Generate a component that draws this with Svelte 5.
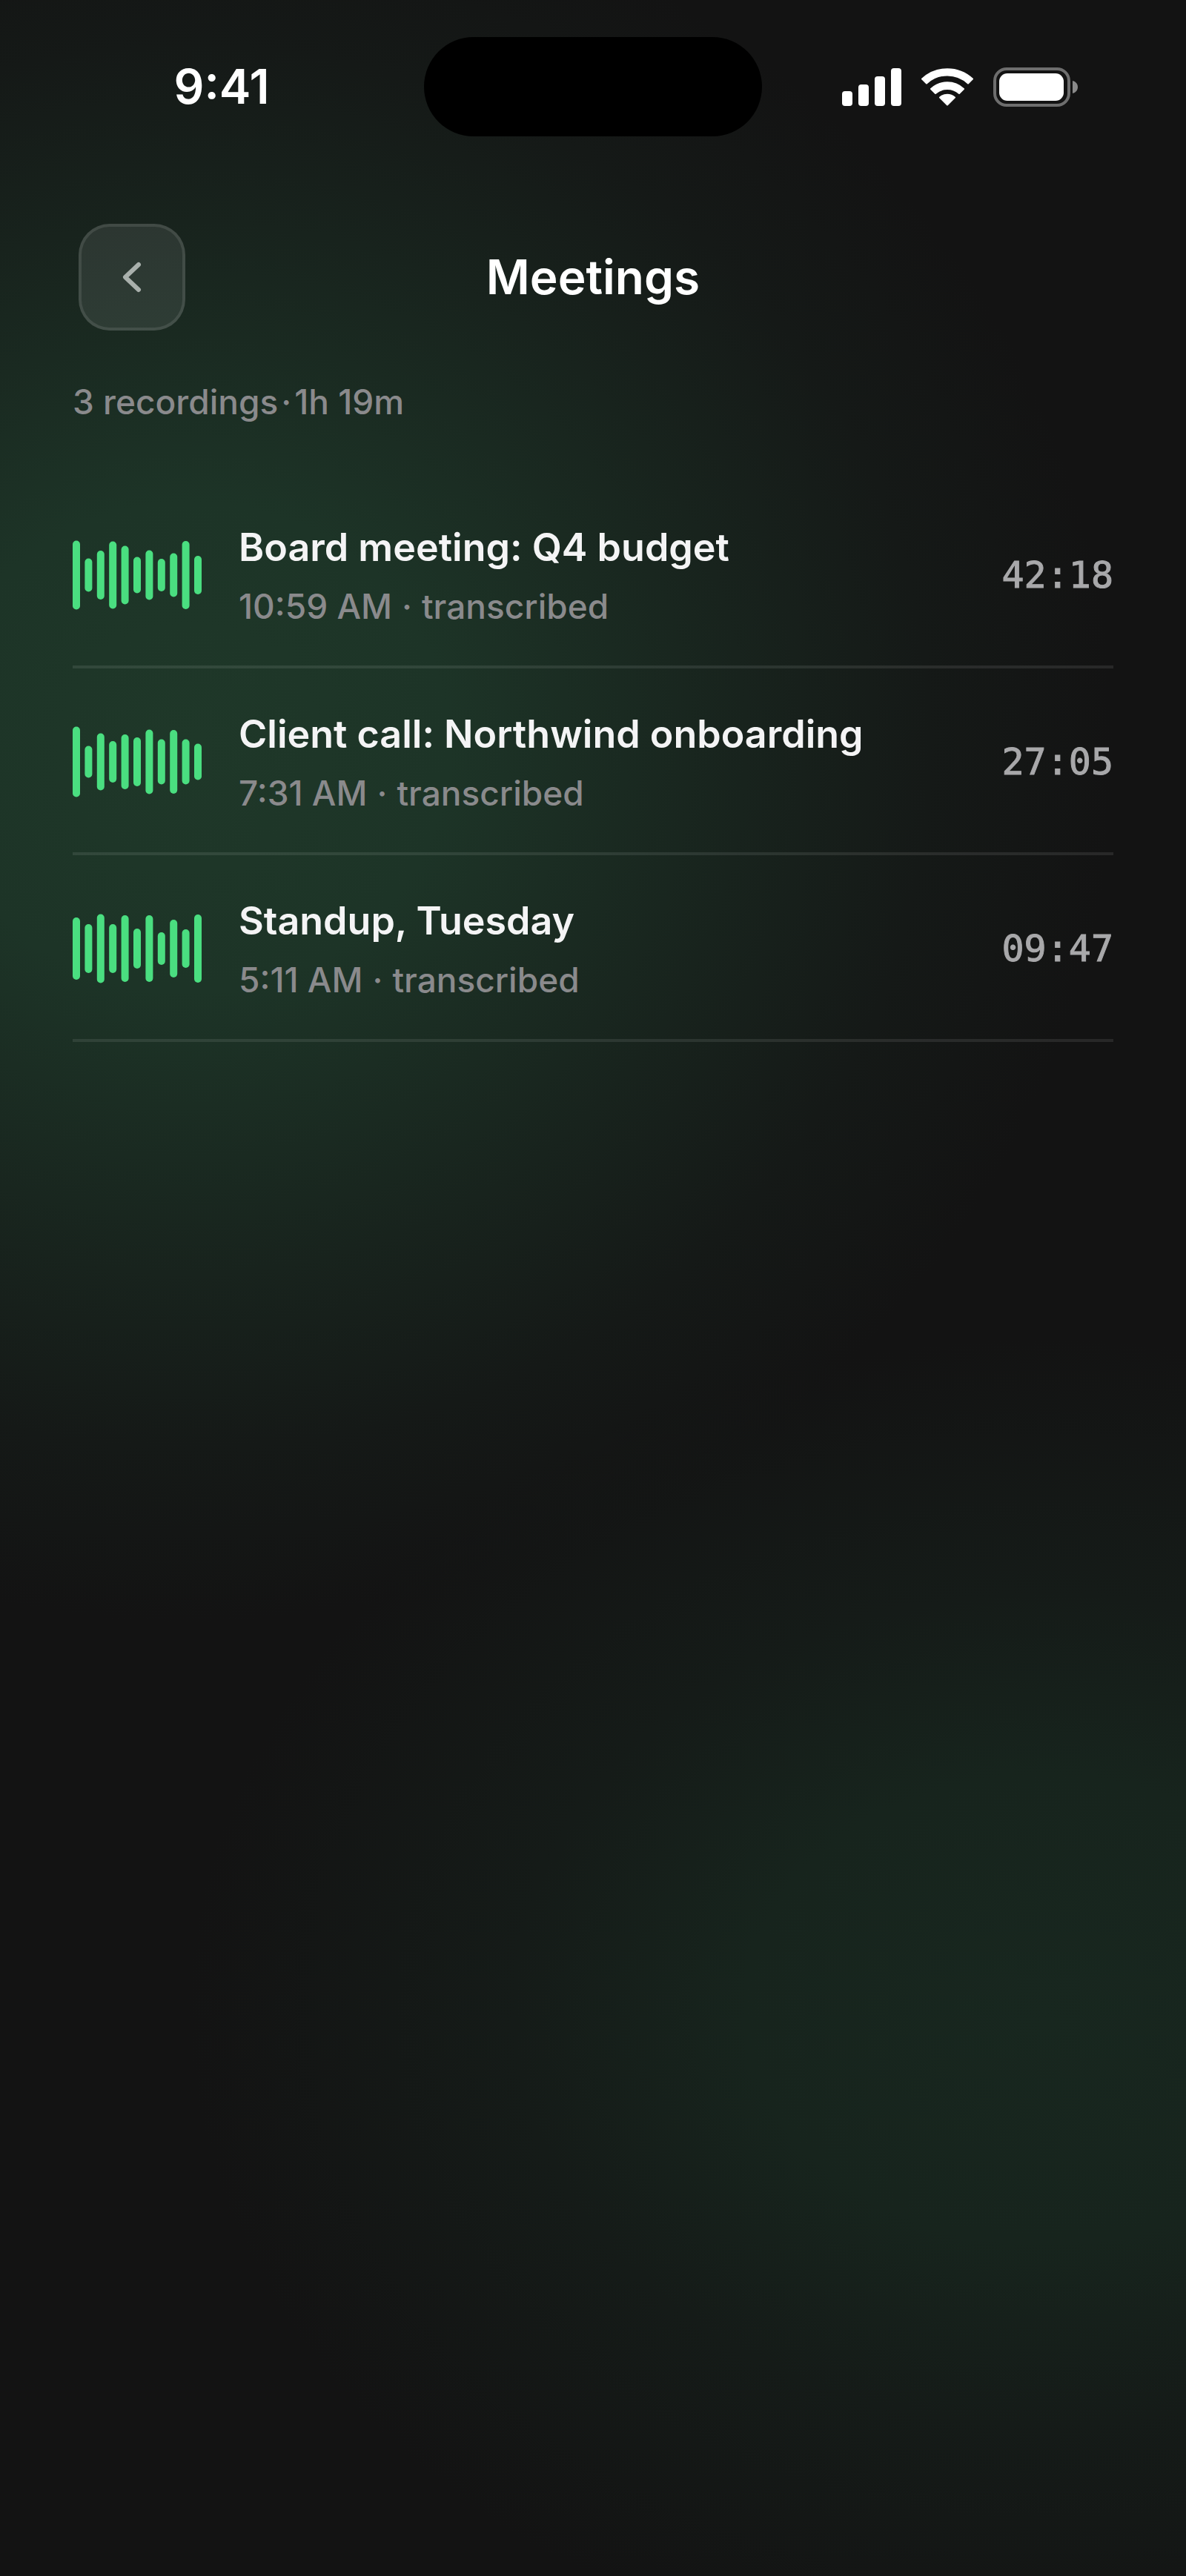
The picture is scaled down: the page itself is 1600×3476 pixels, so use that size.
<script lang="ts">
	type Recording = {
		title: string;
		time: string;
		status: string;
		duration: string;
		levels: number[];
	};

	const BAR_PITCH = 16.4;
	const WAVE_HEIGHT = 96;

	const recordings: Recording[] = [
		{
			title: 'Board meeting: Q4 budget',
			time: '10:59 AM',
			status: 'transcribed',
			duration: '42:18',
			levels: [93, 45, 66, 91, 79, 49, 67, 44, 59, 92, 52]
		},
		{
			title: 'Client call: Northwind onboarding',
			time: '7:31 AM',
			status: 'transcribed',
			duration: '27:05',
			levels: [95, 43, 77, 56, 74, 66, 87, 61, 86, 61, 49]
		},
		{
			title: 'Standup, Tuesday',
			time: '5:11 AM',
			status: 'transcribed',
			duration: '09:47',
			levels: [84, 66, 93, 66, 90, 54, 90, 44, 78, 52, 92]
		}
	];
</script>

<div class="screen">
	<div class="status-bar">
		<span class="clock">9:41</span>
		<span class="island"></span>
		<div class="indicators">
			<svg width="80" height="52" viewBox="0 0 80 52" fill="#fff" aria-hidden="true">
				<rect x="0" y="32" width="14" height="20" rx="4" />
				<rect x="22" y="23" width="14" height="29" rx="4" />
				<rect x="44" y="12" width="14" height="40" rx="4" />
				<rect x="66" y="1" width="14" height="51" rx="4" />
			</svg>
			<svg
				width="70"
				height="52"
				viewBox="0 0 70 52"
				fill="#fff"
				stroke="#fff"
				stroke-width="2"
				stroke-linejoin="round"
				aria-hidden="true"
			>
				<path d="M1 15.500A50 50 0 0 1 69 15.500L63 21.500A41 41 0 0 0 7 21.500Z" />
				<path d="M13 29A32 32 0 0 1 57 29L51 35A24 24 0 0 0 19 35Z" />
				<path d="M25 40.500A15 15 0 0 1 45 40.500L35 50.500Z" />
			</svg>
			<svg width="114" height="53" viewBox="0 0 114 53" aria-hidden="true">
				<rect x="2" y="2" width="100" height="49" rx="16" fill="none" stroke="#6e6e6e" stroke-width="4" />
				<rect x="8" y="8" width="87" height="37" rx="11" fill="#fff" />
				<path d="M107 18c4 1 7 4 7 8.500s-3 7.500-7 8.500z" fill="#8a8a8a" />
			</svg>
		</div>
	</div>

	<header>
		<button type="button" class="back" aria-label="Back">
			<svg width="30" height="44" viewBox="0 0 30 44" aria-hidden="true">
				<path d="M24 5L6 22l18 17" />
			</svg>
		</button>
		<h1>Meetings</h1>
	</header>

	<main>
		<p class="summary">3 recordings<span class="tight-dot">·</span>1h 19m</p>

		<ul>
			{#each recordings as rec (rec.title)}
				<li>
					<svg class="wave" width="174" height={WAVE_HEIGHT} viewBox="0 0 174 {WAVE_HEIGHT}" aria-hidden="true">
						{#each rec.levels as level, i}
							<rect
								x={i * BAR_PITCH}
								y={(WAVE_HEIGHT - level) / 2}
								width="10"
								height={level}
								rx="5"
							/>
						{/each}
					</svg>
					<div class="details">
						<h2>{rec.title}</h2>
						<p>{rec.time}<span class="dot">·</span>{rec.status}</p>
					</div>
					<time>{rec.duration}</time>
				</li>
			{/each}
		</ul>
	</main>
</div>

<style>
	:global(body) {
		margin: 0;
		background: #131313;
	}

	.screen {
		min-height: 100vh;
		font-family: Inter, 'Liberation Sans', sans-serif;
		color: #fff;
		background:
			radial-gradient(ellipse 78% 34% at 16% 29%, #1f3829 0%, #1d3427 28%, #18231d 60%, #151917 80%, transparent 100%),
			radial-gradient(ellipse 72% 26% at 88% 78%, #18271f 0%, #17241d 35%, #151b18 62%, transparent 100%),
			#131313;
	}

	.status-bar {
		display: grid;
		grid-template-columns: 1fr 456px 1fr;
		align-items: center;
		padding-top: 50px;
	}

	.clock {
		padding-left: 26px;
		font-size: 64px;
		font-weight: 600;
		line-height: 80px;
		text-align: center;
	}

	.island {
		height: 134px;
		border-radius: 67px;
		background: #000;
	}

	.indicators {
		display: flex;
		justify-content: center;
		gap: 27px;
		padding-right: 38px;
	}

	header {
		display: grid;
		grid-template-columns: 1fr auto 1fr;
		align-items: center;
		padding: 118px 106px 0;
	}

	.back {
		display: flex;
		align-items: center;
		justify-content: center;
		box-sizing: border-box;
		width: 144px;
		height: 144px;
		padding: 0;
		border: 4px solid rgba(255, 255, 255, 0.18);
		border-radius: 42px;
		background: rgba(255, 255, 255, 0.09);
		background-clip: padding-box;
		cursor: pointer;
	}

	.back path {
		fill: none;
		stroke: #a9b0ac;
		stroke-width: 6;
		stroke-linecap: round;
		stroke-linejoin: round;
	}

	h1 {
		margin: 0;
		font-size: 64px;
		font-weight: 600;
		line-height: 80px;
	}

	main {
		padding: 64px 98px;
	}

	.summary {
		margin: 0;
		font-size: 46px;
		font-weight: 500;
		line-height: 64px;
		color: #8a8a8c;
	}

	.tight-dot {
		margin: 0 4px;
	}

	ul {
		margin: 76px 0 0;
		padding: 0;
		list-style: none;
	}

	li {
		display: flex;
		align-items: center;
		box-sizing: border-box;
		height: 252px;
		padding-top: 4px;
		border-bottom: 4px solid rgba(255, 255, 255, 0.09);
	}

	.wave {
		flex: none;
		fill: #4ade80;
	}

	.details {
		flex: 1;
		min-width: 0;
		margin-left: 50px;
		padding-top: 4px;
	}

	h2 {
		margin: 0;
		font-size: 52px;
		font-weight: 600;
		line-height: 80px;
		color: #f4f4f5;
	}

	.details p {
		margin: 0;
		font-size: 46px;
		font-weight: 500;
		line-height: 78px;
		color: #8a8a8c;
	}

	.dot {
		margin: 0 13px;
	}

	time {
		font-family: 'DejaVu Sans Mono', monospace;
		font-size: 50px;
		color: #a8a8aa;
		-webkit-text-stroke: 1px #a8a8aa;
	}
</style>
